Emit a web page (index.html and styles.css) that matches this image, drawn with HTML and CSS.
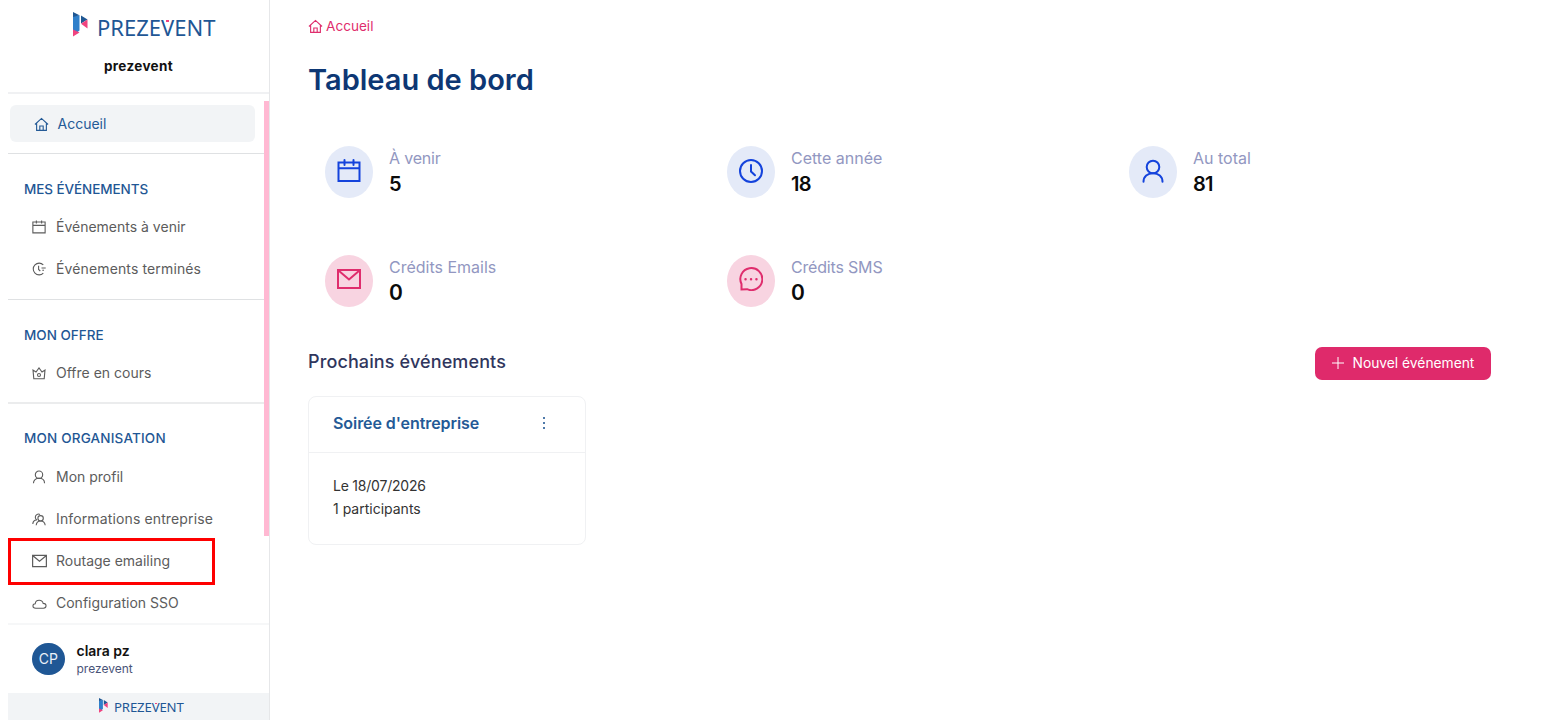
FILE: index.html
```html
<!DOCTYPE html>
<html lang="fr">
<head>
<meta charset="utf-8">
<title>Prezevent - Tableau de bord</title>
<link rel="stylesheet" href="styles.css">
</head>
<body>
<svg class="defs" width="0" height="0">
  <symbol id="home" viewBox="0 0 16 16"><path d="M1 8 8 1.5 15 8M2.8 6.8V14.3H13.2V6.8M6.2 14.3V9.6H9.8V14.3"/></symbol>
  <symbol id="calendar" viewBox="0 0 24 24"><path d="M1.5 3.5H22.500V22H1.500ZM1.500 9.300H22.500M7.500 1V6M16.500 1V6"/></symbol>
  <symbol id="clock" viewBox="0 0 24 24"><circle cx="12" cy="12" r="11"/><path d="M12 6V12.500L16 16.300"/></symbol>
  <symbol id="user" viewBox="0 0 24 24"><circle cx="12" cy="8" r="6.300"/><path d="M2.500 22.700C2.500 17.500 6.500 14.200 12 14.200S21.500 17.500 21.500 22.700"/></symbol>
  <symbol id="mail" viewBox="0 0 24 20"><path d="M1 1H23V19H1ZM1.500 1.500 12 10.500 22.500 1.500"/></symbol>
  <symbol id="mark" viewBox="0 0 15 25">
    <path fill="#2f7fca" d="M0 4 6.500 3.300V18.500L0 23.500Z"/>
    <path fill="#1f5793" d="M0 0 6.500 3.300 0 5ZM8 3.500 14.500 7.500 8 11.500Z"/>
    <path fill="#f0437f" d="M14.500 7.500V16.500L8 11.700ZM0 17.500 6.500 20.500 0 24.500Z"/>
  </symbol>
</svg>
<div class="app">
  <aside class="sidebar">
    <header class="brand">
      <div class="logo"><svg class="logo-mark"><use href="#mark"/></svg><span class="logo-word">PREZE<span class="logo-v">V</span>ENT</span></div>
      <div class="org">prezevent</div>
    </header>
    <nav class="nav">
      <div class="thumb"></div>
      <div class="group home-group">
        <a class="item active"><svg class="ico"><use href="#home"/></svg><span>Accueil</span></a>
      </div>
      <div class="group events">
        <h2>MES ÉVÉNEMENTS</h2>
        <a class="item"><svg class="ico"><use href="#calendar"/></svg><span>Événements à venir</span></a>
        <a class="item"><svg class="ico" viewBox="0 0 14 14"><path d="M11.300 2.800A5.900 5.900 0 1 0 11.300 11.200M6.600 3.800V7.500L8.300 9M9.500 6H13.700M10.300 8.300H12"/></svg><span class="spaced">Événements terminés</span></a>
      </div>
      <div class="group offer">
        <h2>MON OFFRE</h2>
        <a class="item"><svg class="ico" viewBox="0 0 14 14"><path d="M1.800 12.700 1 4 4 6 7 2 10 6 13 4 12.200 12.700Z"/><circle cx="7" cy="9" r="1.500"/></svg><span>Offre en cours</span></a>
      </div>
      <div class="group organisation">
        <h2>MON ORGANISATION</h2>
        <a class="item"><svg class="ico"><use href="#user"/></svg><span>Mon profil</span></a>
        <a class="item"><svg class="ico" viewBox="0 0 14 14"><circle cx="8.600" cy="6.300" r="2.700"/><path d="M4.200 13.300C4.400 10.500 6 9 8.600 9S12.900 10.500 13.200 13.300M5 8A3 3 0 1 1 8 2.400M.8 12C.9 9.800 2 8.200 4.700 7.900"/></svg><span class="spaced">Informations entreprise</span></a>
        <a class="item marked"><svg class="ico wide"><use href="#mail"/></svg><span>Routage emailing</span></a>
        <a class="item"><svg class="ico wide" viewBox="0 0 16 14"><path d="M4 12.500C1.800 12.500 1 11.300 1 10.200 1 8.800 2 8 3.500 7.900 3.600 5.500 5.300 4 7.700 4S11.500 5.400 11.900 7.400C13.800 7.400 15 8.500 15 10S13.900 12.500 12.200 12.500Z"/></svg><span>Configuration SSO</span></a>
      </div>
    </nav>
    <div class="account">
      <div class="avatar">CP</div>
      <div><div class="name">clara pz</div><div class="company">prezevent</div></div>
    </div>
    <footer class="powered"><svg class="logo-mark"><use href="#mark"/></svg><span class="logo-word">PREZE<span class="logo-v">V</span>ENT</span></footer>
  </aside>
  <main class="main">
    <div class="crumb"><svg class="ico"><use href="#home"/></svg><span>Accueil</span></div>
    <h1>Tableau de bord</h1>
    <section class="stats">
      <div class="stat"><div class="disc blue"><svg><use href="#calendar"/></svg></div><div><div class="label tight">À venir</div><div class="value">5</div></div></div>
      <div class="stat"><div class="disc blue"><svg><use href="#clock"/></svg></div><div><div class="label">Cette année</div><div class="value">18</div></div></div>
      <div class="stat"><div class="disc blue"><svg><use href="#user"/></svg></div><div><div class="label">Au total</div><div class="value">81</div></div></div>
      <div class="stat"><div class="disc pink"><svg><use href="#mail"/></svg></div><div><div class="label">Crédits Emails</div><div class="value zero">0</div></div></div>
      <div class="stat"><div class="disc pink"><svg viewBox="0 0 24 24"><path d="M2.500 22.500V17A11 11 0 1 1 8 22.200Z"/><path class="dots" d="M6.500 12.300H6.600M12 12.300H12.100M17.400 12.300H17.500"/></svg></div><div><div class="label tight">Crédits SMS</div><div class="value zero">0</div></div></div>
    </section>
    <div class="upcoming">
      <h3>Prochains événements</h3>
      <button class="create"><svg viewBox="0 0 12 12"><path d="M6 0V12M0 6H12"/></svg><span>Nouvel événement</span></button>
    </div>
    <article class="card">
      <div class="card-head"><h4>Soirée d'entreprise</h4><svg viewBox="0 0 4 12"><path d="M1 0H3V2H1ZM1 5H3V7H1ZM1 10H3V12H1Z"/></svg></div>
      <div class="card-body"><div class="date">Le 18/07/2026</div><div class="people">1 participants</div></div>
    </article>
  </main>
</div>
</body>
</html>
```
FILE: styles.css
```css
*, *::after { box-sizing: border-box; }
body { margin: 0; background: #fff; font-family: Inter, "Open Sans", sans-serif; color: #111; overflow: hidden; }
h1, h2, h3, h4 { margin: 0; }
svg { fill: none; stroke: currentColor; flex: none; }
.defs { position: absolute; }
.app { display: flex; height: 722px; padding-left: 8px; }
.sidebar { width: 262px; flex: none; height: 720px; border-right: 1px solid #e6e7e9; display: flex; flex-direction: column; }
.brand { height: 94px; border-bottom: 2px solid #f0f1f3; padding-top: 12px; flex: none; }
.logo { display: flex; align-items: center; height: 25px; padding-left: 65px; }
.logo-mark { width: 15px; height: 25px; stroke: none; }
.logo-word { font-family: "Noto Sans", sans-serif; font-size: 22px; line-height: 25px; color: #1f5795; margin: 5px 0 0 9px; }
.logo-v { background: linear-gradient(#ef437f, #ef437f) center 8px / 3px 2px no-repeat; }
.org { margin-top: 20px; text-align: center; font-size: 13.5px; line-height: 18px; font-weight: 700; letter-spacing: 0.35px; }
.nav { position: relative; height: 531px; overflow: hidden; flex: none; border-bottom: 2px solid #f6f7f8; }
.thumb { position: absolute; right: 0; top: 7px; width: 5px; height: 435px; background: #ffb8d2; }
.group { margin-right: 5px; border-bottom: 1px solid #dfe1e3; }
.home-group { height: 60px; padding: 11px 9px 0 2px; }
.events { height: 146px; }
.offer { height: 104px; border-bottom-width: 2px; border-color: #ebeced; }
.organisation { border: 0; }
.group h2 { padding: 26px 0 0 16px; height: 51px; font-size: 13.5px; line-height: 18px; font-weight: 500; color: #1f5795; }
.events h2 { letter-spacing: -0.08px; }
.organisation h2 { padding-top: 25px; letter-spacing: 0.18px; }
.item { display: flex; align-items: center; height: 42.2px; padding-left: 24px; font-size: 14px; font-weight: 400; color: #5c5c5c; white-space: nowrap; }
.item .ico { width: 14px; height: 14px; margin: 1px 10px 0 0; stroke-width: 1.1px; }
.item .ico.wide { width: 15px; margin-right: 9px; }
.item .ico:has(use) { stroke-width: 1.9px; }
.spaced { letter-spacing: 0.13px; }
.item.active { height: 37px; background: #f2f4f6; border-radius: 6px; color: #245a96; }
.item.active .ico { width: 15px; height: 15px; margin-right: 9px; margin-left: -0.5px; stroke-width: 1.2px; }
.marked { position: relative; }
.marked::after { content: ""; position: absolute; left: 0; top: -1.5px; width: 207px; height: 47px; border: 3px solid #fe0000; }
.account { height: 68px; display: flex; align-items: center; padding-left: 24px; flex: none; }
.avatar { width: 32.5px; height: 32.5px; border-radius: 50%; background: #1f5795; color: #e9f0f8; font-size: 14px; line-height: 32px; text-align: center; margin-right: 12px; }
.name { font-size: 14px; line-height: 18px; font-weight: 600; margin-top: 1px; }
.company { font-size: 12px; line-height: 18px; color: #4a5478; }
.powered { height: 27px; background: #f2f4f6; display: flex; align-items: center; padding-left: 91px; flex: none; }
.powered .logo-mark { width: 9px; height: 15px; margin-top: -2px; }
.powered .logo-word { font-size: 13.2px; margin: 2px 0 0 6px; letter-spacing: -0.15px; }
.powered .logo-v { background-size: 2px 1px; background-position: center 5px; }
.main { flex: 1; min-width: 0; padding: 16px 51.5px 0 38px; }
.crumb { display: flex; align-items: center; height: 20px; gap: 3px; color: #df2d6d; font-size: 13.6px; }
.crumb .ico { width: 15px; height: 15px; stroke-width: 1.2px; }
h1 { margin-top: 24px; font-size: 29px; line-height: 40px; font-weight: 600; color: #0d3774; }
.stats { display: grid; grid-template-columns: repeat(3, 402px); grid-auto-rows: 52px; row-gap: 56.5px; margin: 46px 0 0 16.5px; }
.stat { display: flex; }
.disc { width: 48.5px; height: 52px; border-radius: 50%; display: flex; justify-content: center; align-items: flex-start; padding-top: 12.5px; margin-right: 16px; }
.disc svg { width: 24px; height: 24px; stroke-width: 2px; stroke-linecap: round; }
.dots { stroke-width: 2.4px; }
.blue { background: #e4eaf8; color: #1443dc; }
.pink { background: #f8d4e1; color: #df2d6d; }
.label { font-size: 16px; line-height: 24px; color: #9297c1; }
.tight { letter-spacing: -0.18px; }
.value { font-size: 20px; line-height: 28px; font-weight: 600; color: #0b0b0b; letter-spacing: -0.7px; }
.zero { font-size: 21px; }
.upcoming { display: flex; justify-content: space-between; align-items: flex-start; margin-top: 40.5px; }
h3 { font-size: 18px; line-height: 29px; font-weight: 500; color: #30365d; letter-spacing: 0.12px; }
.create { width: 176px; height: 33px; border: 0; border-radius: 7px; background: #df2a6b; color: #fff; display: flex; align-items: center; padding: 0 0 2px 17px; font: 400 13.8px Inter, sans-serif; white-space: nowrap; }
.create svg { width: 12px; height: 12px; margin-right: 9px; }
.card { width: 278px; height: 149px; margin-top: 16px; border: 1px solid #f0f1f3; border-radius: 8px; }
.card-head { height: 56px; padding: 0 39px 3px 24px; border-bottom: 1px solid #f0f1f3; display: flex; align-items: center; justify-content: space-between; color: #245a96; }
.card-head svg { width: 4px; height: 12px; fill: currentColor; stroke: none; opacity: 0.8; }
h4 { font-size: 16px; font-weight: 600; white-space: nowrap; letter-spacing: -0.07px; }
.card-body { padding: 21px 0 0 24px; font-size: 14px; line-height: 23px; color: #333; }
.date { letter-spacing: -0.22px; }
```
